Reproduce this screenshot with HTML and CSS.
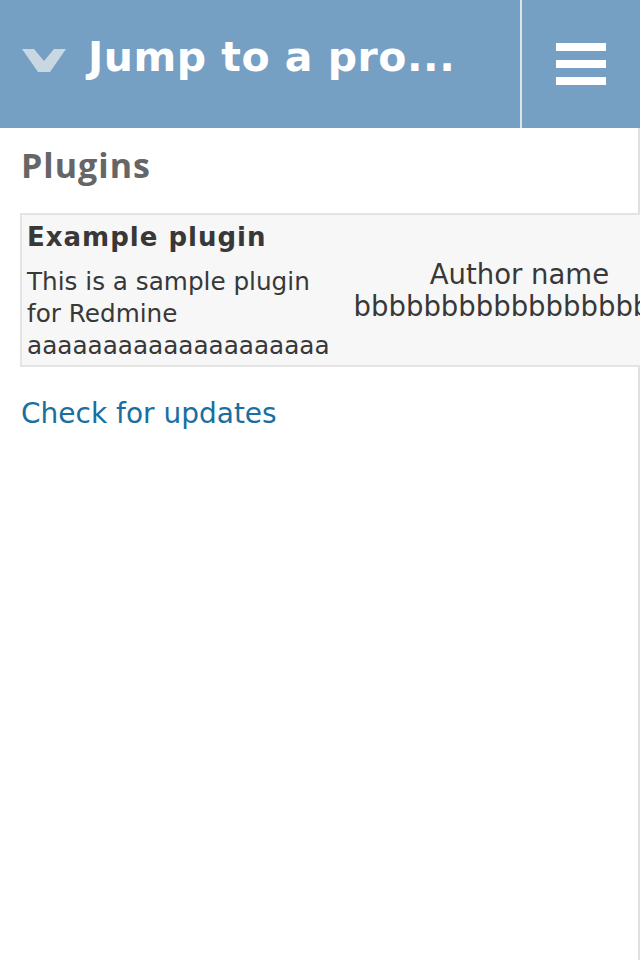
FILE: index.html
```html
<!DOCTYPE html>
<html>
<head>
<meta charset="utf-8">
<link rel="stylesheet" href="styles.css">
</head>
<body>
<div class="header">
  <div class="jump">
    <svg class="chevron" width="44" height="24" viewBox="0 0 44 24"><polygon points="0,0 12,0 22,12 32,0 44,0 28,23 16,23" fill="#c9d7e3"/></svg>
    <span class="jump-text">Jump to a pro...</span>
  </div>
  <div class="menu">
    <span class="bar"></span><span class="bar"></span><span class="bar"></span>
  </div>
</div>
<div class="content">
  <h2 class="title">Plugins</h2>
  <table class="list">
    <tr class="odd">
      <td class="name">
        <span class="plugin-name">Example plugin</span>
        <span class="desc">This is a sample plugin for Redmine aaaaaaaaaaaaaaaaaaaa</span>
      </td>
      <td class="author">Author name bbbbbbbbbbbbbbbbbbb</td>
    </tr>
  </table>
  <p class="updates"><a href="#">Check for updates</a></p>
</div>
</body>
</html>
```
FILE: styles.css
```css
html, body {
  margin: 0;
  padding: 0;
  background: #fff;
}
body {
  font-family: "DejaVu Sans", Verdana, sans-serif;
  color: #383838;
  width: 640px;
  overflow: hidden;
}
.header {
  height: 128px;
  background: #769fc4;
  display: flex;
  align-items: stretch;
}
.jump {
  flex: 1;
  display: flex;
  align-items: center;
  padding-left: 22px;
  border-right: 2px solid #dde4ea;
}
.chevron {
  display: block;
  margin-top: -6px;
}
.jump-text {
  margin-left: 22px;
  margin-bottom: 14px;
  color: #fff;
  font-family: "DejaVu Sans", sans-serif;
  font-weight: bold;
  font-size: 41px;
  letter-spacing: 0.5px;
  white-space: nowrap;
}
.menu {
  width: 118px;
  display: flex;
  flex-direction: column;
  justify-content: center;
  align-items: center;
  gap: 9px;
}
.bar {
  display: block;
  width: 50px;
  height: 8px;
  background: #fff;
}
.content {
  min-height: 832px;
  border-right: 2px solid #e0e0e0;
  padding: 0 20px;
  box-sizing: border-box;
}
.title {
  margin: 0;
  padding-top: 17px;
  padding-left: 1px;
  height: 85px;
  box-sizing: border-box;
  font-family: "Open Sans", sans-serif;
  font-weight: 700;
  font-size: 34px;
  letter-spacing: 1px;
  color: #666;
  line-height: 40px;
}
.list {
  border-collapse: collapse;
  border: 2px solid #e4e4e4;
  background: #f7f7f7;
}
.list td {
  vertical-align: middle;
}
.name {
  padding: 6px 20px 3px 5px;
}
.plugin-name {
  display: block;
  font-weight: bold;
  font-size: 26px;
  letter-spacing: 1px;
  line-height: 32px;
  margin-bottom: 13px;
  white-space: nowrap;
}
.desc {
  display: block;
  font-size: 24.7px;
  line-height: 32px;
}
.author {
  padding: 0 4px;
  text-align: center;
  font-size: 27.5px;
  line-height: 32px;
}
.updates {
  margin: 30px 0 0 0;
  padding-left: 1px;
  font-size: 28px;
}
.updates a {
  color: #1a6fa0;
  text-decoration: none;
}
```
